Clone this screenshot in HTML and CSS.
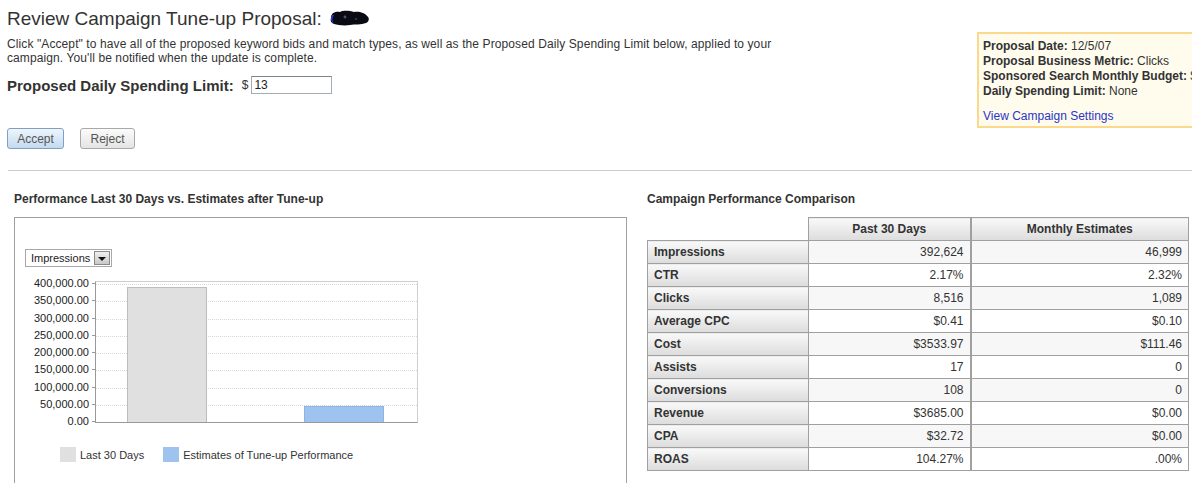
FILE: index.html
```html
<!DOCTYPE html>
<html>
<head>
<meta charset="utf-8">
<title>Review Campaign Tune-up Proposal</title>
<link rel="stylesheet" href="styles.css">
</head>
<body>
<div class="page">
  <div class="top">
    <div class="intro">
      <h1 class="title">Review Campaign Tune-up Proposal: <svg class="blob" width="42" height="16" viewBox="0 0 42 16"><path d="M3 8 C3 3 7 1 12 2 C16 0 22 1 26 2 C31 1 37 3 39 6 C42 8 41 12 38 13 C33 15 27 14 22 15 C16 16 10 15 6 14 C3 13 2 11 3 8 Z" fill="#0a0a14"/><path d="M4 5 C2 8 3 12 6 14 C4 11 4 8 6 5 Z" fill="#2a3ad8"/><circle cx="17" cy="7" r="1.4" fill="#555"/><circle cx="28" cy="9" r="1" fill="#444"/></svg></h1>
      <p class="desc">Click "Accept" to have all of the proposed keyword bids and match types, as well as the Proposed Daily Spending Limit below, applied to your campaign. You'll be notified when the update is complete.</p>
      <div class="limit">
        <span class="limit-label">Proposed Daily Spending Limit:</span>
        <span class="dollar">$</span>
        <input class="limit-input" type="text" value="13">
      </div>
      <div class="buttons">
        <button class="btn btn-accept">Accept</button>
        <button class="btn btn-reject">Reject</button>
      </div>
    </div>
    <aside class="info">
      <div class="info-line"><b>Proposal Date:</b> 12/5/07</div>
      <div class="info-line"><b>Proposal Business Metric:</b> Clicks</div>
      <div class="info-line"><b>Sponsored Search Monthly Budget:</b> $500</div>
      <div class="info-line"><b>Daily Spending Limit:</b> None</div>
      <a class="info-link" href="#">View Campaign Settings</a>
    </aside>
  </div>

  <hr class="rule">

  <div class="bottom">
    <section class="chart-panel">
      <h2 class="section-title">Performance Last 30 Days vs. Estimates after Tune-up</h2>
      <div class="chart-box">
        <div class="select">
          <span class="select-text">Impressions</span>
          <span class="select-btn"><span class="arrow"></span></span>
        </div>
        <div class="chart-row">
          <div class="yaxis">
            <div class="ylabel">400,000.00</div>
            <div class="ylabel">350,000.00</div>
            <div class="ylabel">300,000.00</div>
            <div class="ylabel">250,000.00</div>
            <div class="ylabel">200,000.00</div>
            <div class="ylabel">150,000.00</div>
            <div class="ylabel">100,000.00</div>
            <div class="ylabel">50,000.00</div>
            <div class="ylabel">0.00</div>
          </div>
          <div class="plot">
            <div class="grid">
              <div class="band"></div><div class="band"></div><div class="band"></div><div class="band"></div>
              <div class="band"></div><div class="band"></div><div class="band"></div><div class="band"></div>
            </div>
            <div class="bars">
              <div class="bar bar-past" style="height:135px"></div>
              <div class="bar bar-est" style="height:16px"></div>
            </div>
          </div>
        </div>
        <div class="legend">
          <span class="swatch swatch-past"></span><span class="legend-text">Last 30 Days</span>
          <span class="swatch swatch-est"></span><span class="legend-text">Estimates of Tune-up Performance</span>
        </div>
      </div>
    </section>

    <section class="table-panel">
      <h2 class="section-title">Campaign Performance Comparison</h2>
      <table class="compare">
        <thead>
          <tr><th class="empty"></th><th class="col-past">Past 30 Days</th><th class="col-est">Monthly Estimates</th></tr>
        </thead>
        <tbody>
          <tr><th>Impressions</th><td>392,624</td><td class="col-est">46,999</td></tr>
          <tr><th>CTR</th><td>2.17%</td><td class="col-est">2.32%</td></tr>
          <tr><th>Clicks</th><td>8,516</td><td class="col-est">1,089</td></tr>
          <tr><th>Average CPC</th><td>$0.41</td><td class="col-est">$0.10</td></tr>
          <tr><th>Cost</th><td>$3533.97</td><td class="col-est">$111.46</td></tr>
          <tr><th>Assists</th><td>17</td><td class="col-est">0</td></tr>
          <tr><th>Conversions</th><td>108</td><td class="col-est">0</td></tr>
          <tr><th>Revenue</th><td>$3685.00</td><td class="col-est">$0.00</td></tr>
          <tr><th>CPA</th><td>$32.72</td><td class="col-est">$0.00</td></tr>
          <tr><th>ROAS</th><td>104.27%</td><td class="col-est">.00%</td></tr>
        </tbody>
      </table>
    </section>
  </div>
</div>
</body>
</html>
```

FILE: styles.css
```css
html, body {
  margin: 0;
  padding: 0;
  overflow: hidden;
  background: #fff;
}
body {
  font-family: "Liberation Sans", Arial, sans-serif;
  font-size: 12px;
  color: #333;
}
.page {
  width: 1192px;
}

/* ---------- top ---------- */
.top {
  display: flex;
  align-items: flex-start;
}
.intro {
  width: 970px;
  flex-shrink: 0;
  padding-left: 7px;
  box-sizing: border-box;
}
.title {
  margin: 8px 0 0;
  font-size: 19px;
  line-height: 22px;
  font-weight: normal;
  color: #333;
}
.blob {
  vertical-align: -1px;
  margin-left: 1px;
}
.desc {
  margin: 7px 0 0;
  width: 790px;
  line-height: 14px;
  font-size: 12px;
  color: #333;
  letter-spacing: 0.1px;
}
.limit {
  display: flex;
  align-items: center;
  height: 20px;
  margin-top: 10px;
}
.limit-label {
  font-size: 15px;
  font-weight: bold;
  color: #333;
}
.dollar {
  margin-left: 8px;
  font-size: 12px;
  color: #333;
}
.limit-input {
  margin-left: 3px;
  width: 81px;
  height: 18px;
  box-sizing: border-box;
  border: 1px solid #a5acb2;
  border-top-color: #7c858c;
  padding: 0 2px;
  font-family: "Liberation Sans", Arial, sans-serif;
  font-size: 12px;
  color: #222;
  outline: none;
}
.buttons {
  display: flex;
  gap: 16px;
  margin-top: 33px;
}
.btn {
  height: 21px;
  box-sizing: border-box;
  border-radius: 3px;
  font-family: "Liberation Sans", Arial, sans-serif;
  font-size: 12px;
  color: #555;
  padding: 0;
  cursor: pointer;
}
.btn-accept {
  width: 57px;
  border: 1px solid #7f9fc4;
  background: linear-gradient(#eef5fc, #c4daf0);
}
.btn-reject {
  width: 55px;
  border: 1px solid #a9a9a9;
  background: linear-gradient(#fbfbfb, #e4e4e4);
}

.info {
  flex-shrink: 0;
  margin-top: 32px;
  margin-left: 7px;
  width: 262px;
  box-sizing: border-box;
  border: 2px solid #fbd98c;
  background: #fffcee;
  padding: 5px 6px 2px 4px;
  white-space: nowrap;
}
.info-line {
  line-height: 15px;
  color: #333;
}
.info-line b {
  font-weight: bold;
}
.info-link {
  display: block;
  margin-top: 10px;
  line-height: 15px;
  color: #2b35c4;
  text-decoration: none;
}

.rule {
  border: 0;
  border-top: 1px solid #cccccc;
  margin: 21px 0 0 8px;
  height: 0;
}

/* ---------- bottom ---------- */
.bottom {
  display: flex;
  align-items: flex-start;
  padding-left: 14px;
  margin-top: 21px;
}
.section-title {
  margin: 0 0 11px;
  font-size: 12px;
  line-height: 14px;
  font-weight: bold;
  color: #333;
}
.chart-panel {
  width: 613px;
  flex-shrink: 0;
  margin-right: 20px;
}
.chart-box {
  height: 300px;
  box-sizing: border-box;
  border: 1px solid #a0a0a0;
  padding: 31px 10px 0;
}
.select {
  display: flex;
  align-items: center;
  width: 87px;
  height: 18px;
  box-sizing: border-box;
  border: 1px solid #a8a8a8;
  background: #fff;
}
.select-text {
  flex: 1;
  padding-left: 5px;
  font-size: 11px;
  color: #222;
}
.select-btn {
  width: 16px;
  height: 14px;
  box-sizing: border-box;
  margin-right: 1px;
  border: 1px solid #8a8a8a;
  background: linear-gradient(#f0f0f0, #c8c8c8);
  display: flex;
  align-items: center;
  justify-content: center;
}
.arrow {
  width: 0;
  height: 0;
  border-left: 4px solid transparent;
  border-right: 4px solid transparent;
  border-top: 4px solid #111;
  margin-top: 2px;
}
.chart-row {
  display: flex;
  align-items: flex-start;
  margin-top: 14px;
}
.yaxis {
  width: 70px;
  margin-top: -6px;
  display: flex;
  flex-direction: column;
}
.ylabel {
  height: 17.25px;
  line-height: 17.25px;
  padding-right: 6px;
  text-align: right;
  font-size: 11px;
  color: #222;
  background: linear-gradient(#999, #999) no-repeat right center / 3px 1px;
}
.plot {
  width: 323px;
  height: 142px;
  box-sizing: border-box;
  border-top: 1px solid #cfcfcf;
  border-right: 1px solid #cfcfcf;
  border-left: 1px solid #999;
  border-bottom: 1px solid #999;
  display: grid;
}
.grid, .bars {
  grid-area: 1 / 1;
}
.grid {
  padding-top: 2px;
  display: flex;
  flex-direction: column;
}
.band {
  height: 17.25px;
  box-sizing: border-box;
  border-top: 1px dotted #d8d8d8;
}
.bars {
  display: flex;
  align-items: flex-end;
  justify-content: space-between;
  padding: 0 33px 0 31px;
}
.bar {
  width: 80px;
  box-sizing: border-box;
}
.bar-past {
  background: #e0e0e0;
  border: 1px solid #bdbdbd;
  border-bottom: 0;
}
.bar-est {
  background: #9ec3ee;
  border: 1px solid #8db5e4;
  border-bottom: 0;
}
.legend {
  display: flex;
  align-items: center;
  margin-top: 17px;
  padding-left: 35px;
}
.swatch {
  width: 16px;
  height: 15px;
}
.swatch-past {
  background: #e0e0e0;
}
.swatch-est {
  background: #9ec3ee;
  margin-left: 19px;
}
.legend-text {
  margin-left: 4px;
  font-size: 11px;
  color: #333;
}

/* ---------- table ---------- */
.table-panel {
  flex-shrink: 0;
}
.compare {
  border-collapse: collapse;
  font-size: 12px;
  color: #333;
}
.compare th,
.compare td {
  height: 23px;
  padding: 0 6px;
  border: 1px solid #a0a0a0;
  box-sizing: border-box;
}
.compare thead th {
  width: 162px;
  text-align: center;
  font-weight: bold;
  background: linear-gradient(#f9f9f9, #dcdcdc);
}
.compare thead th.empty {
  width: 161px;
  border: none;
  background: none;
}
.compare thead th.col-est {
  width: 218px;
}
.compare tbody th {
  text-align: left;
  font-weight: bold;
  background: linear-gradient(#f9f9f9, #dcdcdc);
}
.compare tbody td {
  text-align: right;
  background: #fff;
}
.compare tbody tr:nth-child(odd) td {
  background: #f7f7f7;
}
.compare .col-est {
  border-left: 2px solid #a0a0a0;
}
```
